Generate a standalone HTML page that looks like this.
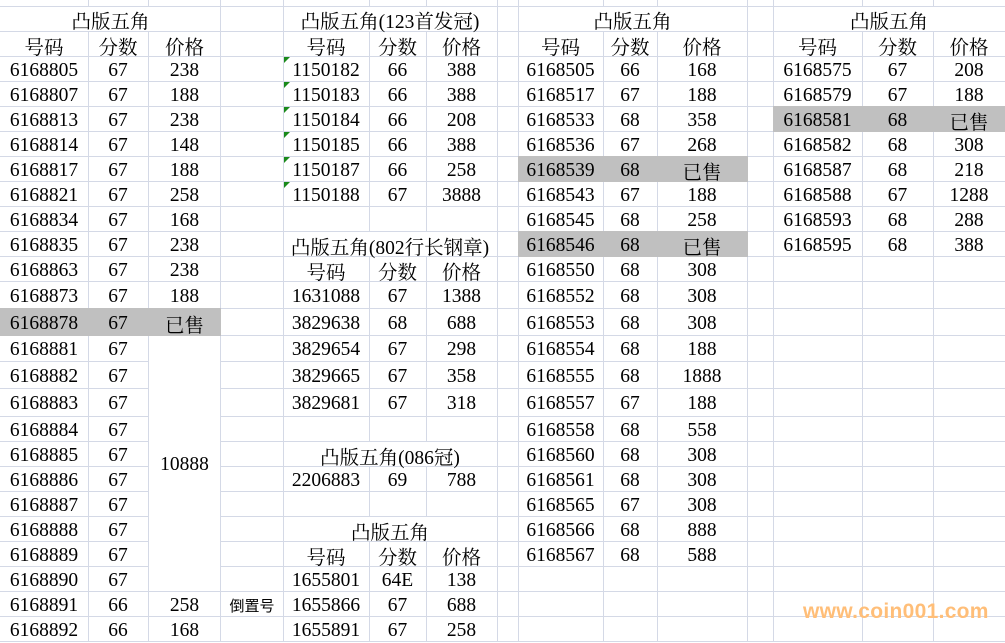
<!DOCTYPE html>
<html><head><meta charset="utf-8"><style>
html,body{margin:0;padding:0;background:#fff;}
body{width:1005px;height:642px;position:relative;overflow:hidden;font-family:"Liberation Serif","Noto Serif CJK SC",serif;font-size:19.5px;color:#000;}
svg.grid{position:absolute;left:0;top:0;width:1005px;height:642px}
.r{position:absolute;left:0;width:1005px}
.r>div{position:absolute;top:1px;height:100%;display:flex;align-items:center;justify-content:center;white-space:nowrap}
.a{left:0;width:88px}.b{left:88px;width:60px}.c{left:148px;width:73px}.d{left:221px;width:62px}
.e{left:283px;width:86px}.f{left:369px;width:57px}.g{left:426px;width:71px}
.h{left:518px;width:85px}.i{left:603px;width:54px}.j{left:657px;width:90px}
.k{left:773px;width:89px}.l{left:862px;width:71px}.m{left:933px;width:72px}
.T1{left:0;width:221px}.T2{left:283px;width:214px}.T3{left:518px;width:229px}.T4{left:773px;width:232px}
.w{position:absolute;background:#fff}
.s{position:absolute;background:#c0c0c0}
.tri{position:absolute;width:0;height:0;border-top:6px solid #1a8a1a;border-right:6px solid transparent}
.wm{position:absolute;left:803px;top:600px;font-family:"Liberation Sans",sans-serif;font-weight:bold;font-size:21px;color:#ffbe78;letter-spacing:0.3px}
</style></head><body>
<svg class="grid" width="1005" height="642">
<g stroke="#d4d9e6" stroke-width="1" shape-rendering="crispEdges">
<line x1="88.5" y1="0" x2="88.5" y2="642"/><line x1="148.5" y1="0" x2="148.5" y2="642"/><line x1="220.5" y1="0" x2="220.5" y2="642"/>
<line x1="283.5" y1="0" x2="283.5" y2="642"/><line x1="369.5" y1="0" x2="369.5" y2="642"/><line x1="426.5" y1="0" x2="426.5" y2="642"/>
<line x1="497.5" y1="0" x2="497.5" y2="642"/><line x1="518.5" y1="0" x2="518.5" y2="642"/><line x1="603.5" y1="0" x2="603.5" y2="642"/>
<line x1="657.5" y1="0" x2="657.5" y2="642"/><line x1="747.5" y1="0" x2="747.5" y2="642"/><line x1="773.5" y1="0" x2="773.5" y2="642"/>
<line x1="862.5" y1="0" x2="862.5" y2="642"/><line x1="933.5" y1="0" x2="933.5" y2="642"/>
<line x1="0" y1="6.5" x2="1005" y2="6.5"/><line x1="0" y1="31.5" x2="1005" y2="31.5"/><line x1="0" y1="56.5" x2="1005" y2="56.5"/>
<line x1="0" y1="81.5" x2="1005" y2="81.5"/><line x1="0" y1="106.5" x2="1005" y2="106.5"/><line x1="0" y1="131.5" x2="1005" y2="131.5"/>
<line x1="0" y1="156.5" x2="1005" y2="156.5"/><line x1="0" y1="181.5" x2="1005" y2="181.5"/><line x1="0" y1="206.5" x2="1005" y2="206.5"/>
<line x1="0" y1="231.5" x2="1005" y2="231.5"/><line x1="0" y1="256.5" x2="1005" y2="256.5"/><line x1="0" y1="281.5" x2="1005" y2="281.5"/>
<line x1="0" y1="308.5" x2="1005" y2="308.5"/><line x1="0" y1="335.5" x2="1005" y2="335.5"/><line x1="0" y1="361.5" x2="1005" y2="361.5"/>
<line x1="0" y1="388.5" x2="1005" y2="388.5"/><line x1="0" y1="416.5" x2="1005" y2="416.5"/><line x1="0" y1="441.5" x2="1005" y2="441.5"/>
<line x1="0" y1="466.5" x2="1005" y2="466.5"/><line x1="0" y1="491.5" x2="1005" y2="491.5"/><line x1="0" y1="516.5" x2="1005" y2="516.5"/>
<line x1="0" y1="541.5" x2="1005" y2="541.5"/><line x1="0" y1="566.5" x2="1005" y2="566.5"/><line x1="0" y1="591.5" x2="1005" y2="591.5"/>
<line x1="0" y1="616.5" x2="1005" y2="616.5"/><line x1="0" y1="641.5" x2="1005" y2="641.5"/>
</g></svg>
<div class="w" style="left:0;top:7px;width:220px;height:24px"></div>
<div class="w" style="left:284px;top:7px;width:213px;height:24px"></div>
<div class="w" style="left:519px;top:7px;width:228px;height:24px"></div>
<div class="w" style="left:774px;top:7px;width:231px;height:24px"></div>
<div class="w" style="left:284px;top:232px;width:213px;height:24px"></div>
<div class="w" style="left:284px;top:442px;width:213px;height:24px"></div>
<div class="w" style="left:284px;top:517px;width:213px;height:24px"></div>
<div class="w" style="left:149px;top:336px;width:71px;height:255px"></div>
<div class="s" style="left:0;top:308px;width:221px;height:28px"></div>
<div class="s" style="left:518px;top:156px;width:230px;height:26px"></div>
<div class="s" style="left:518px;top:231px;width:230px;height:26px"></div>
<div class="s" style="left:773px;top:106px;width:232px;height:26px"></div>
<div class="tri" style="left:284px;top:57px"></div><div class="tri" style="left:284px;top:82px"></div>
<div class="tri" style="left:284px;top:107px"></div><div class="tri" style="left:284px;top:132px"></div>
<div class="tri" style="left:284px;top:157px"></div><div class="tri" style="left:284px;top:182px"></div>

<div class="r" style="top:6px;height:26px"><div class="T1">凸版五角</div><div class="T2">凸版五角(123首发冠)</div><div class="T3">凸版五角</div><div class="T4">凸版五角</div></div>
<div class="r" style="top:32px;height:25px"><div class="a">号码</div><div class="b">分数</div><div class="c">价格</div><div class="e">号码</div><div class="f">分数</div><div class="g">价格</div><div class="h">号码</div><div class="i">分数</div><div class="j">价格</div><div class="k">号码</div><div class="l">分数</div><div class="m">价格</div></div>
<div class="r" style="top:57px;height:25px"><div class="a">6168805</div><div class="b">67</div><div class="c">238</div><div class="e">1150182</div><div class="f">66</div><div class="g">388</div><div class="h">6168505</div><div class="i">66</div><div class="j">168</div><div class="k">6168575</div><div class="l">67</div><div class="m">208</div></div>
<div class="r" style="top:82px;height:25px"><div class="a">6168807</div><div class="b">67</div><div class="c">188</div><div class="e">1150183</div><div class="f">66</div><div class="g">388</div><div class="h">6168517</div><div class="i">67</div><div class="j">188</div><div class="k">6168579</div><div class="l">67</div><div class="m">188</div></div>
<div class="r" style="top:107px;height:25px"><div class="a">6168813</div><div class="b">67</div><div class="c">238</div><div class="e">1150184</div><div class="f">66</div><div class="g">208</div><div class="h">6168533</div><div class="i">68</div><div class="j">358</div><div class="k">6168581</div><div class="l">68</div><div class="m">已售</div></div>
<div class="r" style="top:132px;height:25px"><div class="a">6168814</div><div class="b">67</div><div class="c">148</div><div class="e">1150185</div><div class="f">66</div><div class="g">388</div><div class="h">6168536</div><div class="i">67</div><div class="j">268</div><div class="k">6168582</div><div class="l">68</div><div class="m">308</div></div>
<div class="r" style="top:157px;height:25px"><div class="a">6168817</div><div class="b">67</div><div class="c">188</div><div class="e">1150187</div><div class="f">66</div><div class="g">258</div><div class="h">6168539</div><div class="i">68</div><div class="j">已售</div><div class="k">6168587</div><div class="l">68</div><div class="m">218</div></div>
<div class="r" style="top:182px;height:25px"><div class="a">6168821</div><div class="b">67</div><div class="c">258</div><div class="e">1150188</div><div class="f">67</div><div class="g">3888</div><div class="h">6168543</div><div class="i">67</div><div class="j">188</div><div class="k">6168588</div><div class="l">67</div><div class="m">1288</div></div>
<div class="r" style="top:207px;height:25px"><div class="a">6168834</div><div class="b">67</div><div class="c">168</div><div class="h">6168545</div><div class="i">68</div><div class="j">258</div><div class="k">6168593</div><div class="l">68</div><div class="m">288</div></div>
<div class="r" style="top:232px;height:25px"><div class="a">6168835</div><div class="b">67</div><div class="c">238</div><div class="T2">凸版五角(802行长钢章)</div><div class="h">6168546</div><div class="i">68</div><div class="j">已售</div><div class="k">6168595</div><div class="l">68</div><div class="m">388</div></div>
<div class="r" style="top:257px;height:25px"><div class="a">6168863</div><div class="b">67</div><div class="c">238</div><div class="e">号码</div><div class="f">分数</div><div class="g">价格</div><div class="h">6168550</div><div class="i">68</div><div class="j">308</div></div>
<div class="r" style="top:282px;height:27px"><div class="a">6168873</div><div class="b">67</div><div class="c">188</div><div class="e">1631088</div><div class="f">67</div><div class="g">1388</div><div class="h">6168552</div><div class="i">68</div><div class="j">308</div></div>
<div class="r" style="top:309px;height:27px"><div class="a">6168878</div><div class="b">67</div><div class="c">已售</div><div class="e">3829638</div><div class="f">68</div><div class="g">688</div><div class="h">6168553</div><div class="i">68</div><div class="j">308</div></div>
<div class="r" style="top:336px;height:26px"><div class="a">6168881</div><div class="b">67</div><div class="e">3829654</div><div class="f">67</div><div class="g">298</div><div class="h">6168554</div><div class="i">68</div><div class="j">188</div></div>
<div class="r" style="top:362px;height:27px"><div class="a">6168882</div><div class="b">67</div><div class="e">3829665</div><div class="f">67</div><div class="g">358</div><div class="h">6168555</div><div class="i">68</div><div class="j">1888</div></div>
<div class="r" style="top:389px;height:28px"><div class="a">6168883</div><div class="b">67</div><div class="e">3829681</div><div class="f">67</div><div class="g">318</div><div class="h">6168557</div><div class="i">67</div><div class="j">188</div></div>
<div class="r" style="top:417px;height:25px"><div class="a">6168884</div><div class="b">67</div><div class="h">6168558</div><div class="i">68</div><div class="j">558</div></div>
<div class="r" style="top:442px;height:25px"><div class="a">6168885</div><div class="b">67</div><div class="T2">凸版五角(086冠)</div><div class="h">6168560</div><div class="i">68</div><div class="j">308</div></div>
<div class="r" style="top:467px;height:25px"><div class="a">6168886</div><div class="b">67</div><div class="e">2206883</div><div class="f">69</div><div class="g">788</div><div class="h">6168561</div><div class="i">68</div><div class="j">308</div></div>
<div class="r" style="top:492px;height:25px"><div class="a">6168887</div><div class="b">67</div><div class="h">6168565</div><div class="i">67</div><div class="j">308</div></div>
<div class="r" style="top:517px;height:25px"><div class="a">6168888</div><div class="b">67</div><div class="T2">凸版五角</div><div class="h">6168566</div><div class="i">68</div><div class="j">888</div></div>
<div class="r" style="top:542px;height:25px"><div class="a">6168889</div><div class="b">67</div><div class="e">号码</div><div class="f">分数</div><div class="g">价格</div><div class="h">6168567</div><div class="i">68</div><div class="j">588</div></div>
<div class="r" style="top:567px;height:25px"><div class="a">6168890</div><div class="b">67</div><div class="e">1655801</div><div class="f">64E</div><div class="g">138</div></div>
<div class="r" style="top:592px;height:25px"><div class="a">6168891</div><div class="b">66</div><div class="c">258</div><div class="d" style="font-family:'Liberation Sans','Noto Sans CJK SC',sans-serif;font-size:15px">倒置号</div><div class="e">1655866</div><div class="f">67</div><div class="g">688</div></div>
<div class="r" style="top:617px;height:25px"><div class="a">6168892</div><div class="b">66</div><div class="c">168</div><div class="e">1655891</div><div class="f">67</div><div class="g">258</div></div>
<div class="r" style="top:336px;height:256px"><div class="c">10888</div></div>
<div class="wm">www.coin001.com</div>
</body></html>
